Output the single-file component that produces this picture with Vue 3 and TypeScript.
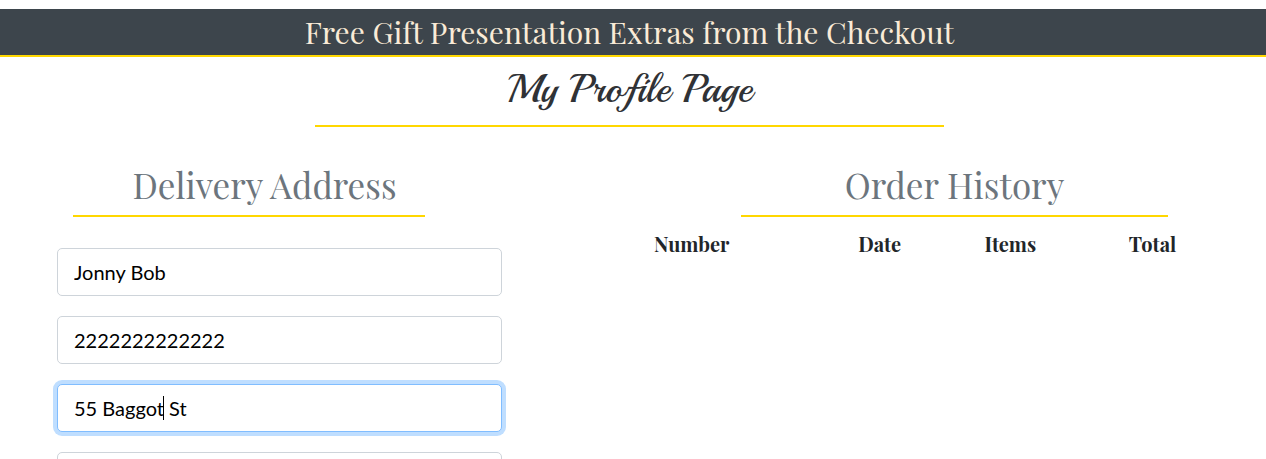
<script setup lang="ts">
import { onMounted, reactive, ref } from 'vue'

interface Field {
  id: string
  label: string
  value: string
}

const fields = reactive<Field[]>([
  { id: 'full-name', label: 'Full name', value: 'Jonny Bob' },
  { id: 'phone', label: 'Phone number', value: '2222222222222' },
  { id: 'street', label: 'Street address', value: '55 Baggot St' },
  { id: 'street-2', label: 'Street address 2', value: '' },
])

const columns = ['Number', 'Date', 'Items', 'Total']
const form = ref<HTMLFormElement | null>(null)

onMounted(() => {
  const street = form.value?.querySelector<HTMLInputElement>('#street')
  street?.focus({ preventScroll: true })
  street?.setSelectionRange(9, 9)
})
</script>

<template>
  <div class="page">
    <header class="banner">Free Gift Presentation Extras from the Checkout</header>
    <div class="title">
      <h1>My Profile Page</h1>
      <hr />
    </div>
    <main class="columns">
      <section class="delivery">
        <div class="section-head">
          <h2>Delivery Address</h2>
          <hr />
        </div>
        <form ref="form" @submit.prevent>
          <div v-for="field in fields" :key="field.id" class="field">
            <input :id="field.id" v-model="field.value" type="text" :aria-label="field.label" />
            <span v-if="field.id === 'street'" class="caret"></span>
          </div>
        </form>
      </section>
      <section class="history">
        <div class="section-head">
          <h2>Order History</h2>
          <hr />
        </div>
        <table>
          <thead>
            <tr>
              <th v-for="column in columns" :key="column" scope="col">{{ column }}</th>
            </tr>
          </thead>
        </table>
      </section>
    </main>
  </div>
</template>

<style>
body {
  margin: 0;
  background: #fff;
}
</style>

<style scoped>
.page {
  padding-top: 9px;
  color: #212529;
  font-family: "Playfair Display", "Liberation Serif", serif;
}

.banner {
  padding-right: 7px;
  border-bottom: 2px solid #ffd700;
  background: #3d454c;
  color: #faebd7;
  font-size: 30px;
  line-height: 46px;
  text-align: center;
}

h1,
h2 {
  margin: 0;
  font-weight: 400;
  text-align: center;
}

hr {
  height: 2px;
  margin: 0;
  border: 0;
  background: #ffd700;
}

.title {
  padding-right: 7px;
}

.title h1 {
  padding-bottom: 4px;
  color: #303236;
  font-family: Playball, "Liberation Serif", serif;
  font-size: 40px;
  line-height: 64px;
}

.title hr {
  width: 50%;
  margin: 0 auto;
}

.columns {
  display: grid;
  grid-template-columns: 445fr 601fr;
  column-gap: 152px;
  padding: 30px 11px 0 57px;
}

.section-head h2 {
  padding-bottom: 2px;
  color: #6c757d;
  font-size: 35px;
  line-height: 56px;
}

.delivery h2 {
  padding-right: 30px;
}

.delivery hr {
  width: 79%;
  margin-left: 16px;
}

.history hr {
  width: 71%;
  margin: 0 auto;
}

form {
  display: grid;
  gap: 20px;
  padding-top: 31px;
}

.field {
  position: relative;
  display: flex;
}

input {
  box-sizing: border-box;
  width: 100%;
  height: 48px;
  padding: 0 16px;
  border: 1px solid #ced4da;
  border-radius: 5px;
  background: #fff;
  color: #000;
  caret-color: transparent;
  font-family: Lato, sans-serif;
  font-size: 20px;
}

input:focus {
  border-color: #80bdff;
  outline: 0;
  box-shadow: 0 0 0 4px #bfdeff;
}

.caret {
  position: absolute;
  top: 12px;
  left: 106px;
  width: 1px;
  height: 24px;
  background: #000;
}

table {
  width: 100%;
  margin-top: 15px;
  border-collapse: collapse;
  table-layout: fixed;
}

th {
  padding: 0;
  font-size: 20px;
  font-weight: 700;
  line-height: 24px;
  text-align: left;
}

th:nth-child(1) {
  width: 34%;
}

th:nth-child(2) {
  width: 21%;
}

th:nth-child(3) {
  width: 24%;
}
</style>
